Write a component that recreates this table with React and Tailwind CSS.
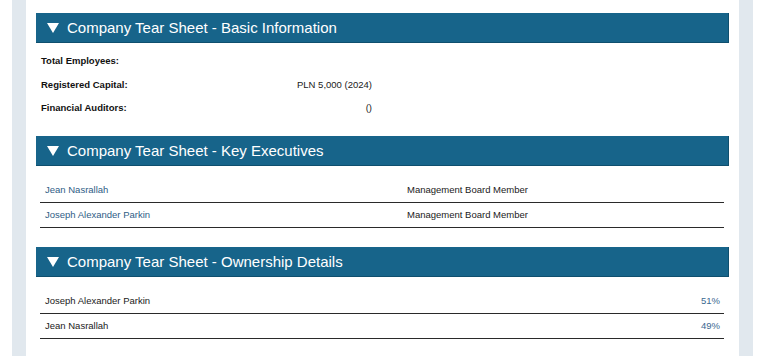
import React from "react";

const sans = { fontFamily: '"Liberation Sans", Arial, sans-serif' };

function SectionHeader({ title }) {
  return (
    <div className="flex h-[30px] items-center bg-[#17648a] border-b border-r border-[#0f4f6e] pl-[11px]">
      <svg width="12" height="10" viewBox="0 0 12 10" className="mr-[8px]">
        <polygon points="0,0 12,0 6,10" fill="#ffffff" />
      </svg>
      <span className="text-[15px] leading-none text-white">{title}</span>
    </div>
  );
}

const basic = [
  { label: "Total Employees:", value: "", h: "h-[24px]" },
  { label: "Registered Capital:", value: "PLN 5,000 (2024)", h: "h-[25px]" },
  { label: "Financial Auditors:", value: "()", h: "h-[21px]" },
];

const executives = [
  { name: "Jean Nasrallah", role: "Management Board Member" },
  { name: "Joseph Alexander Parkin", role: "Management Board Member" },
];

const owners = [
  { name: "Joseph Alexander Parkin", share: "51%" },
  { name: "Jean Nasrallah", share: "49%" },
];

export default function App() {
  return (
    <div className="h-[356px] w-[768px] overflow-hidden bg-white" style={sans}>
      <div className="ml-[12px] h-full w-[741px] bg-[#e1e8ee] px-[14px]">
        <div className="h-full bg-white px-[10px] pt-[13px]">
          <SectionHeader title="Company Tear Sheet - Basic Information" />
          <div className="mt-[6px] w-[336px] pl-[5px]">
            {basic.map((r) => (
              <div key={r.label} className={`flex items-center justify-between ${r.h}`}>
                <span className="text-[9.5px] font-bold text-[#111]">{r.label}</span>
                <span className="text-[9.5px] text-[#1a1a1a]">{r.value}</span>
              </div>
            ))}
          </div>

          <div className="mt-[17px]">
            <SectionHeader title="Company Tear Sheet - Key Executives" />
          </div>
          <div className="mt-[12px] ml-[4px] mr-[5px]">
            {executives.map((e) => (
              <div key={e.name} className="flex h-[25px] items-center border-b border-[#2a2a2a]">
                <span className="w-[367px] pl-[5px] text-[9.5px] text-[#2f5d86]">{e.name}</span>
                <span className="text-[9.5px] text-[#1a1a1a]">{e.role}</span>
              </div>
            ))}
          </div>

          <div className="mt-[19px]">
            <SectionHeader title="Company Tear Sheet - Ownership Details" />
          </div>
          <div className="mt-[12px] ml-[4px] mr-[5px]">
            {owners.map((o) => (
              <div key={o.name} className="flex h-[25px] items-center justify-between border-b border-[#2a2a2a] pl-[5px] pr-[4px]">
                <span className="text-[9.5px] text-[#1a1a1a]">{o.name}</span>
                <span className="text-[9.5px] text-[#3b6890]">{o.share}</span>
              </div>
            ))}
          </div>
        </div>
      </div>
    </div>
  );
}
